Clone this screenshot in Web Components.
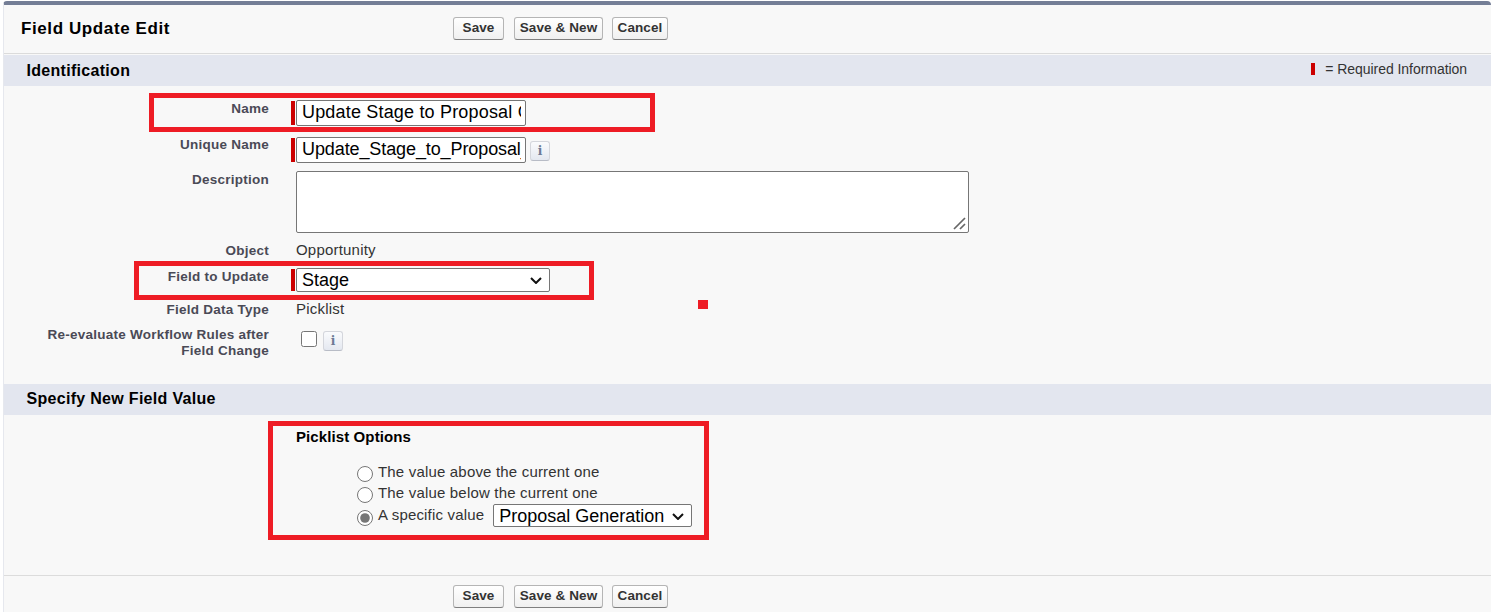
<!DOCTYPE html>
<html lang="en"><head><meta charset="utf-8"><title>Field Update Edit</title>
<style>
html,body{margin:0;padding:0;background:#fff;font-family:"Liberation Sans",Arial,sans-serif}
</style></head><body>
<fu-page>
  <fu-bar title-text="Field Update Edit"></fu-bar>
  <fu-section label="Identification" legend></fu-section>
  <fu-row label="Name" top="100" h="37" lt="1"><fu-text req ls=".18" value="Update Stage to Proposal Generation"></fu-text></fu-row>
  <fu-row label="Unique Name" h="34" lt="0"><fu-text req ls="-.1" value="Update_Stage_to_Proposal_Generation"></fu-text><fu-info style="margin-left:4px;margin-top:4px"></fu-info></fu-row>
  <fu-row label="Description" h="72" lt="1"><fu-area></fu-area></fu-row>
  <fu-row label="Object" h="25" lt="0"><fu-value>Opportunity</fu-value></fu-row>
  <fu-row label="Field to Update" h="34" lt="1"><fu-select req width="254" height="24" value="Stage"></fu-select></fu-row>
  <fu-row label="Field Data Type" h="26" lt="0"><fu-value>Picklist</fu-value></fu-row>
  <fu-row label="Re-evaluate Workflow Rules after Field Change" h="56" lt="-1"><fu-check style="margin-top:3px"></fu-check><fu-info style="margin-left:6px;margin-top:3px"></fu-info></fu-row>
  <fu-section label="Specify New Field Value" style="margin-top:0"></fu-section>
  <fu-options></fu-options>
  <fu-bar footer></fu-bar>
  <fu-mark slot="over" style="left:149px;top:93px;width:506px;height:39px"></fu-mark>
  <fu-mark slot="over" style="left:134px;top:261px;width:460px;height:39px"></fu-mark>
  <fu-mark slot="over" style="left:268px;top:421px;width:441px;height:119px"></fu-mark>
  <fu-mark slot="over" dot style="left:698px;top:300px;width:10px;height:9px"></fu-mark>
</fu-page>
<script>
const def=(name,html,init)=>customElements.define(name,class extends HTMLElement{
  connectedCallback(){ if(this.shadowRoot) return; const s=this.attachShadow({mode:'open'}); s.innerHTML=typeof html==='function'?html(this):html; init&&init(this,s);} });

def('fu-page',`<style>:host{display:block;position:relative;width:1493px;height:614px;overflow:hidden;background:#fff}
.card{position:absolute;left:3px;top:1px;right:2px;bottom:2px;box-sizing:border-box;background:#f8f8f8;border-top:4px solid #747e96;border-left:1px solid #e6e8ee;border-radius:4px 4px 0 0;display:flex;flex-direction:column}
</style><div class="card"><slot></slot></div><slot name="over"></slot>`);

def('fu-btn',`<style>:host{display:inline-block;box-sizing:border-box;height:23px;border:1px solid #b5b5b5;border-bottom-color:#7f7f7f;border-radius:3px;background:linear-gradient(#fff,#f0f0f0);font:bold 13.5px/20px "Liberation Sans",sans-serif;color:#333;letter-spacing:.1px;text-align:center;white-space:nowrap}</style><slot></slot>`);

def('fu-bar',h=>`<style>:host{display:block;flex:none;box-sizing:border-box}
.b{display:flex;align-items:center;box-sizing:border-box;height:49px;padding-left:17px;border-bottom:1px solid #dbdbdb}
.t{width:432px;font:bold 17px "Liberation Sans",sans-serif;letter-spacing:.6px;color:#000;white-space:nowrap}
.g{display:flex;gap:10px;align-self:flex-start;margin-top:12px}
:host([footer]){margin-top:auto}
:host([footer]) .b{height:37px;border-bottom:0;border-top:1px solid #dcdcdc}
:host([footer]) .g{margin-top:9px}
</style><div class="b"><div class="t">${h.getAttribute('title-text')||''}</div><div class="g"><fu-btn style="width:51px">Save</fu-btn><fu-btn style="width:89px">Save &amp; New</fu-btn><fu-btn style="width:56px;margin-left:-1px">Cancel</fu-btn></div></div>`);

def('fu-section',h=>`<style>:host{display:block;flex:none;margin-top:1px}
.s{box-sizing:border-box;height:31px;background:#e3e6ef;display:flex;align-items:center;justify-content:space-between;padding:0 24px ${h.hasAttribute('legend')?0:2}px 22.5px;font:bold 16px "Liberation Sans",sans-serif;letter-spacing:.3px;color:#000}
.l{display:flex;align-items:center;margin-top:-3px;font:14px "Liberation Sans",sans-serif;letter-spacing:-.05px;color:#333}
.l i{display:block;width:4px;height:12px;background:#c00;margin-right:10px}</style>
<div class="s"><span>${h.getAttribute('label')}</span>${h.hasAttribute('legend')?'<span class="l"><i></i>= Required Information</span>':''}</div>`);

def('fu-row',h=>`<style>:host{display:flex;flex:none;box-sizing:border-box;height:${h.getAttribute('h')}px;${h.hasAttribute('top')?'margin-top:14px;':''}}
.lab{box-sizing:border-box;width:265px;flex:none;padding-left:40px;margin-top:${h.getAttribute('lt')}px;text-align:right;font:bold 13.5px/16px "Liberation Sans",sans-serif;color:#4a4a56;letter-spacing:.25px}
.f{margin-left:27px;display:flex;align-items:flex-start}</style>
<div class="lab">${h.getAttribute('label')}</div><div class="f"><slot></slot></div>`);

def('fu-text',h=>`<style>:host{display:block;position:relative}
input{display:block;box-sizing:border-box;width:230px;height:26px;padding:0 4px 2px 5px;border:1px solid #767676;border-radius:2px;background:#fff;font:18px "Liberation Sans",sans-serif;letter-spacing:${h.getAttribute('ls')}px;color:#000;outline:0}
i{position:absolute;left:-5px;top:1px;bottom:1px;width:4px;background:#c00}</style><i></i><input value="${h.getAttribute('value')}" aria-label="${h.getAttribute('value')}">`);

def('fu-area',`<style>:host{display:block;position:relative}textarea{display:block;box-sizing:border-box;width:673px;height:62px;border:1px solid #767676;border-radius:2px;background:#fff;margin:0;outline:0;resize:none}
svg{position:absolute;right:3px;bottom:3px;pointer-events:none}</style><textarea aria-label="Description"></textarea><svg width="13" height="13" viewBox="0 0 13 13"><path d="M1 12L12 1M7 12l5-5" fill="none" stroke="#666" stroke-width="1.7"/></svg>`);

def('fu-value',`<style>:host{display:block;margin-top:-1px;font:15px/16px "Liberation Sans",sans-serif;letter-spacing:.2px;color:#333}</style><slot></slot>`);

def('fu-select',h=>`<style>:host{display:inline-block;position:relative}
select{appearance:none;display:block;box-sizing:border-box;width:${h.getAttribute('width')}px;height:${h.getAttribute('height')}px;margin:0;padding:0 0 0 5px;border:1px solid #767676;border-radius:2px;background:#fff;font:18px "Liberation Sans",sans-serif;color:#000;outline:0}
i{position:absolute;left:-5px;top:1px;bottom:1px;width:4px;background:#c00}
svg{position:absolute;right:8px;top:50%;margin-top:-3px;pointer-events:none}</style>${h.hasAttribute('req')?'<i></i>':''}<select aria-label="${h.getAttribute('value')}"><option>${h.getAttribute('value')}</option></select><svg width="12" height="7" viewBox="0 0 12 7"><path d="M1 1l5 5 5-5" fill="none" stroke="#111" stroke-width="2"/></svg>`);

def('fu-check',`<style>:host{display:block}input{display:block;width:16px;height:16px;margin:0 0 0 5px;accent-color:#767676}</style><input type="checkbox" aria-label="Re-evaluate Workflow Rules after Field Change">`);

def('fu-info',`<style>:host{display:block;box-sizing:border-box;width:20px;height:20px;border:1px solid #d4d6dc;border-bottom-color:#b8bcc6;border-radius:3px;background:linear-gradient(#fafbfd,#e4e8f0);text-align:center;font:bold 12px/18px "DejaVu Serif",serif;color:#6d7a94}</style>i`);

def('fu-options',`<style>:host{display:block;flex:none;height:159px;box-sizing:border-box;padding:14px 0 0 292px;font:15px/16px "Liberation Sans",sans-serif;color:#333}
h4{margin:0 0 17px;font:bold 15px/16px "Liberation Sans",sans-serif;letter-spacing:.1px;color:#000}
.o{display:flex;align-items:center;margin-left:61px;height:21px;letter-spacing:.18px}
.o input{width:16px;height:16px;margin:3px 5px 0 0;accent-color:#767676}
.o span{margin-top:-2px}
.o fu-select{margin:-2px 0 0 9px;letter-spacing:0}
.o:last-child{height:25px}
.o:last-child span{margin-top:-4px}</style>
<h4>Picklist Options</h4>
<div class="o"><input type="radio" name="v" aria-label="The value above the current one"><span>The value above the current one</span></div>
<div class="o"><input type="radio" name="v" aria-label="The value below the current one"><span>The value below the current one</span></div>
<div class="o"><input type="radio" name="v" checked aria-label="A specific value"><span>A specific value</span><fu-select width="199" height="23" value="Proposal Generation"></fu-select></div>`);

def('fu-mark',h=>`<style>:host{position:absolute;box-sizing:border-box;display:block;${h.hasAttribute('dot')?'background:#ee1c25':'border:5px solid #ee1c25'}}</style>`);
</script>
</body></html>
